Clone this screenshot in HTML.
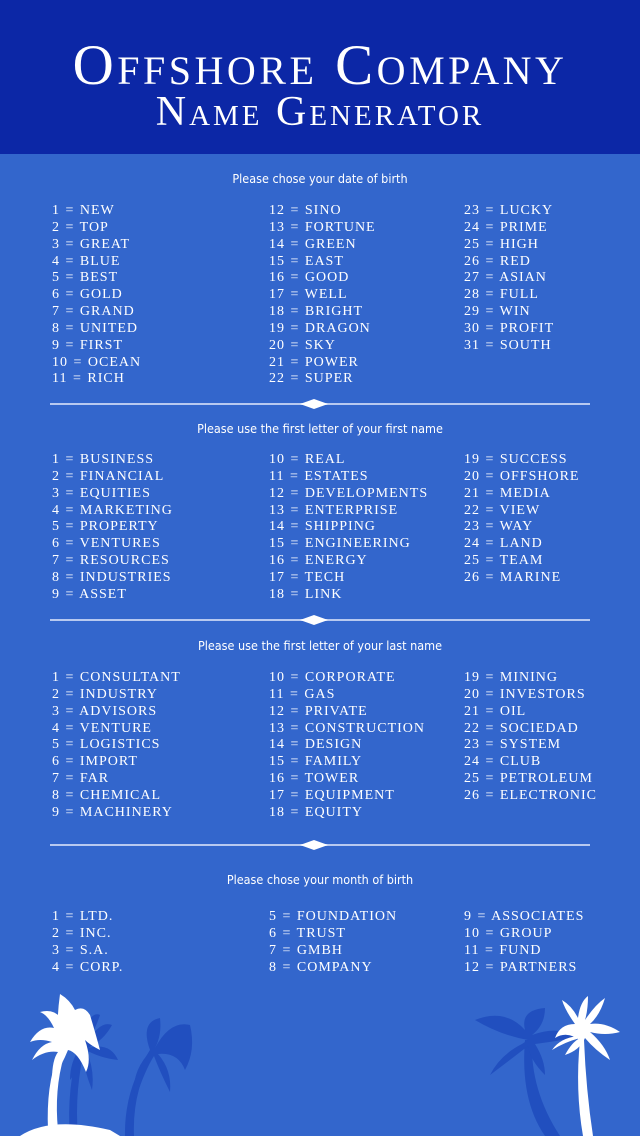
<!DOCTYPE html>
<html><head><meta charset="utf-8"><style>
*{margin:0;padding:0;box-sizing:border-box}
body{width:640px;height:1136px;background:#3366cc;position:relative;overflow:hidden;font-family:"Liberation Serif",serif;color:#fff}
.hdr{position:absolute;left:0;top:0;width:640px;height:154px;background:#0c27a6}
.t1{position:absolute;top:36px;left:0;width:640px;text-align:center;font-size:57px;font-variant:small-caps;letter-spacing:3.5px;line-height:60px}
.t2{position:absolute;top:89px;left:0;width:640px;text-align:center;font-size:42px;font-variant:small-caps;letter-spacing:3px;line-height:46px}
.st{position:absolute;left:0;width:640px;text-align:center;font-family:"DejaVu Sans Condensed","DejaVu Sans",sans-serif;font-size:12.5px;line-height:14px}
.col{position:absolute;font-size:14px;letter-spacing:1px;word-spacing:1px;line-height:16.85px;white-space:nowrap}
.div{position:absolute;left:50px;width:540px;height:2px;background:#b8c9f0}
.dia{position:absolute;left:300px;width:28px;height:10px;background:#fff;clip-path:polygon(0 50%,50% 0,100% 50%,50% 100%)}
</style></head><body>
<div class="hdr"><div class="t1">Offshore Company</div><div class="t2">Name Generator</div></div>

<div class="st" style="top:172px">Please chose your date of birth</div>
<div class="col" style="left:52px;top:203px">1 = NEW<br>2 = TOP<br>3 = GREAT<br>4 = BLUE<br>5 = BEST<br>6 = GOLD<br>7 = GRAND<br>8 = UNITED<br>9 = FIRST<br>10 = OCEAN<br>11 = RICH</div>
<div class="col" style="left:269px;top:203px">12 = SINO<br>13 = FORTUNE<br>14 = GREEN<br>15 = EAST<br>16 = GOOD<br>17 = WELL<br>18 = BRIGHT<br>19 = DRAGON<br>20 = SKY<br>21 = POWER<br>22 = SUPER</div>
<div class="col" style="left:464px;top:203px">23 = LUCKY<br>24 = PRIME<br>25 = HIGH<br>26 = RED<br>27 = ASIAN<br>28 = FULL<br>29 = WIN<br>30 = PROFIT<br>31 = SOUTH</div>
<div class="div" style="top:403px"></div><div class="dia" style="top:399px"></div>

<div class="st" style="top:422px">Please use the first letter of your first name</div>
<div class="col" style="left:52px;top:452px">1 = BUSINESS<br>2 = FINANCIAL<br>3 = EQUITIES<br>4 = MARKETING<br>5 = PROPERTY<br>6 = VENTURES<br>7 = RESOURCES<br>8 = INDUSTRIES<br>9 = ASSET</div>
<div class="col" style="left:269px;top:452px">10 = REAL<br>11 = ESTATES<br>12 = DEVELOPMENTS<br>13 = ENTERPRISE<br>14 = SHIPPING<br>15 = ENGINEERING<br>16 = ENERGY<br>17 = TECH<br>18 = LINK</div>
<div class="col" style="left:464px;top:452px">19 = SUCCESS<br>20 = OFFSHORE<br>21 = MEDIA<br>22 = VIEW<br>23 = WAY<br>24 = LAND<br>25 = TEAM<br>26 = MARINE</div>
<div class="div" style="top:619px"></div><div class="dia" style="top:615px"></div>

<div class="st" style="top:639px">Please use the first letter of your last name</div>
<div class="col" style="left:52px;top:670px">1 = CONSULTANT<br>2 = INDUSTRY<br>3 = ADVISORS<br>4 = VENTURE<br>5 = LOGISTICS<br>6 = IMPORT<br>7 = FAR<br>8 = CHEMICAL<br>9 = MACHINERY</div>
<div class="col" style="left:269px;top:670px">10 = CORPORATE<br>11 = GAS<br>12 = PRIVATE<br>13 = CONSTRUCTION<br>14 = DESIGN<br>15 = FAMILY<br>16 = TOWER<br>17 = EQUIPMENT<br>18 = EQUITY</div>
<div class="col" style="left:464px;top:670px">19 = MINING<br>20 = INVESTORS<br>21 = OIL<br>22 = SOCIEDAD<br>23 = SYSTEM<br>24 = CLUB<br>25 = PETROLEUM<br>26 = ELECTRONIC</div>
<div class="div" style="top:844px"></div><div class="dia" style="top:840px"></div>

<div class="st" style="top:873px">Please chose your month of birth</div>
<div class="col" style="left:52px;top:909px">1 = LTD.<br>2 = INC.<br>3 = S.A.<br>4 = CORP.</div>
<div class="col" style="left:269px;top:909px">5 = FOUNDATION<br>6 = TRUST<br>7 = GMBH<br>8 = COMPANY</div>
<div class="col" style="left:464px;top:909px">9 = ASSOCIATES<br>10 = GROUP<br>11 = FUND<br>12 = PARTNERS</div>

<svg width="640" height="156" style="position:absolute;left:0;top:980px" viewBox="0 0 640 156">
<g fill="#214fbf">
<path d="M70 156 Q66 110 80 60 L86 62 Q74 110 78 156Z"/>
<path d="M80 60 Q90 30 100 35 Q96 48 86 64 Q100 40 112 45 Q104 60 88 68 Q110 62 118 80 Q100 78 86 70 Q95 90 92 110 Q84 90 82 72 Q78 90 70 100 Q70 82 80 68Z"/>
<path d="M125 156 Q124 110 150 70 L155 72 Q132 110 134 156Z"/>
<path d="M150 70 Q140 42 160 38 Q162 55 155 68 Q170 40 190 45 Q196 70 185 90 Q178 72 158 74 Q172 90 170 112 Q160 92 154 76 Q145 90 135 120 Q130 95 148 74Z"/>
<path d="M545 156 Q520 120 525 60 L532 60 Q530 110 560 156Z"/>
<path d="M528 60 Q500 55 475 40 Q505 28 525 50 Q520 30 545 28 Q545 45 532 55 Q560 45 575 58 Q550 62 535 64 Q545 80 545 95 Q530 80 528 66 Q510 80 490 95 Q500 75 522 64Z"/>
</g>
<g fill="#fff">
<path d="M20 156 Q50 136 110 150 L120 156Z"/>
<path d="M48 150 Q46 105 58 75 L64 76 Q54 110 58 150Z"/>
<path d="M60 78 Q55 50 60 14 Q70 20 75 30 Q84 25 90 35 Q96 55 100 70 Q90 65 85 60 Q92 80 86 92 Q78 72 68 70 Q62 85 52 100 Q52 80 58 72 Q45 70 32 80 Q40 64 52 62 Q40 58 30 62 Q40 45 54 48 Q48 35 40 32 Q55 28 62 40Z"/>
<path d="M583 156 Q575 110 580 60 L584 60 Q586 110 593 156Z"/>
<path d="M582 62 Q568 50 555 58 Q560 44 575 44 Q565 30 562 20 Q572 26 578 38 Q580 22 588 16 Q588 30 585 40 Q595 25 605 18 Q600 35 590 44 Q605 42 620 52 Q605 56 590 52 Q605 65 610 80 Q595 70 585 58 Q580 70 565 75 Q572 62 580 58 Q565 62 552 70 Q560 58 578 56Z"/>
</g>
</svg>
</body></html>
